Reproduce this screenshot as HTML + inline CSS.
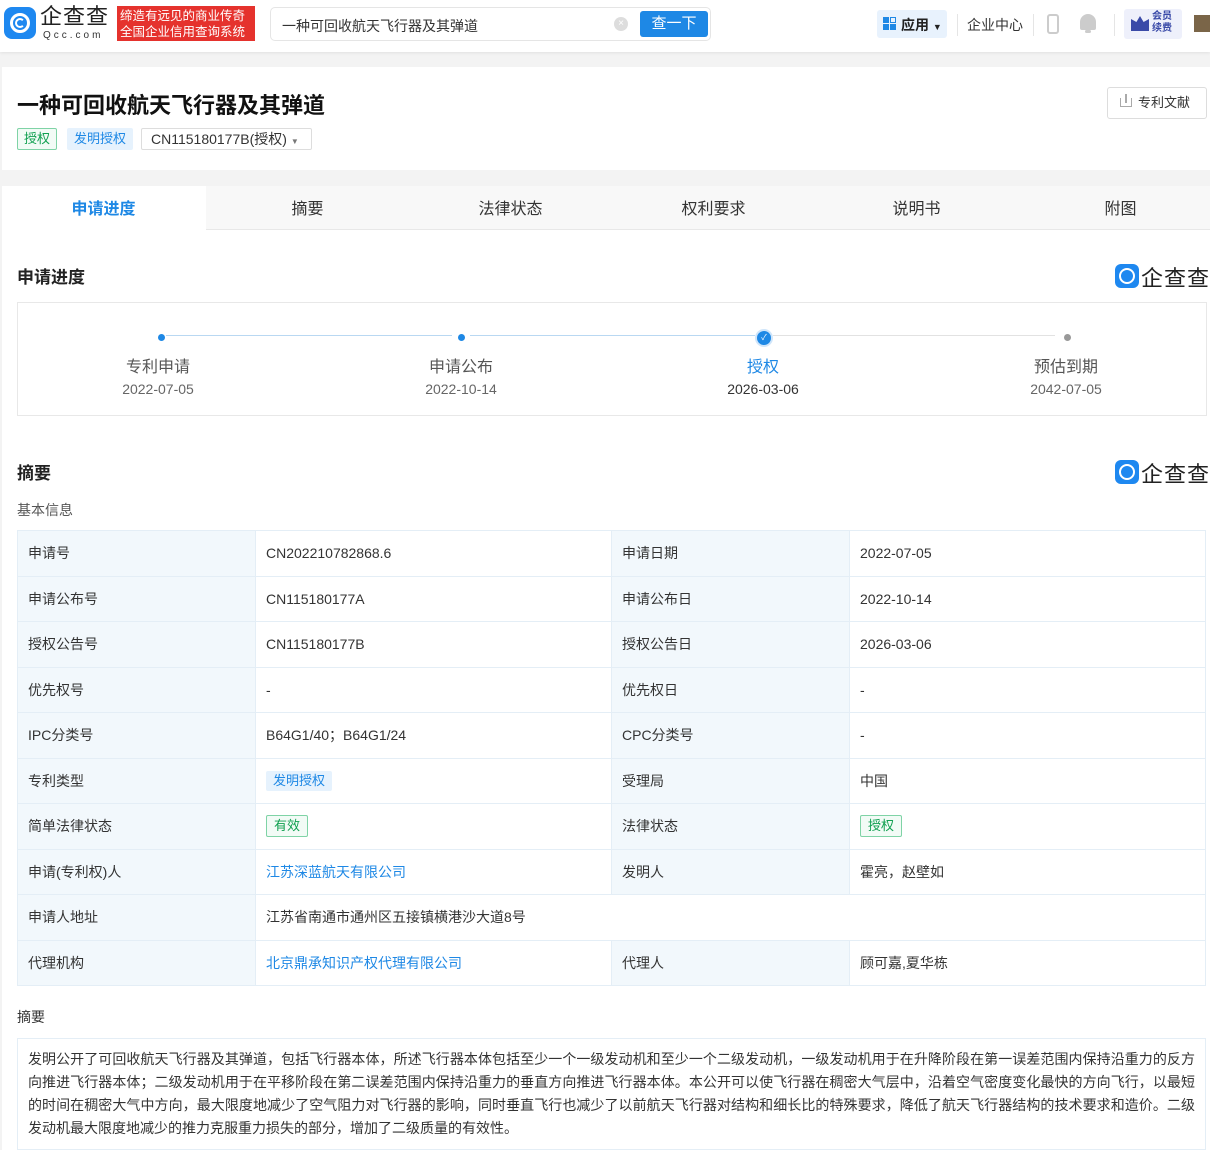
<!DOCTYPE html>
<html><head><meta charset="utf-8">
<style>
*{margin:0;padding:0;box-sizing:border-box}
body{width:1210px;height:1150px;overflow:hidden;background:#f3f3f3;font-family:"Liberation Sans","Noto Sans CJK SC",sans-serif;color:#333;font-size:14px;position:relative}
.abs{position:absolute}
.hdr{left:0;top:0;width:1210px;height:52px;background:#fff;box-shadow:0 1px 3px rgba(0,0,0,.08)}
.card{left:2px;width:1208px;background:#fff}
table{border-collapse:collapse;position:absolute;left:17px;top:530px;width:1189px}
td{border:1px solid #e4eef6;height:45.5px;padding:0 10px;font-size:14px;color:#333}
td.l{background:#f2f8fc;width:238px}
td.v{width:356px}
td.l2{background:#f2f8fc;width:238px}
.tag{display:inline-block;font-size:13px;padding:0 7px;line-height:20px;border-radius:2px}
.blue{background:#e6f2fd;color:#1e88e5}
.green{border:1px solid #7fd3a6;color:#10a050;background:#f2fbf6}
a{color:#1e88e5;text-decoration:none}
.tab{top:186px;height:44px;width:203px;text-align:center;line-height:48px;font-size:16px;color:#333}
.step{text-align:center;width:160px}
.step .n{font-size:16px;color:#555}
.step .d{font-size:14px;color:#666;margin-top:4px}
.logo2{font-size:22px;color:#222;letter-spacing:1px}
</style></head><body>
<div class="abs hdr">
  <div class="abs" style="left:4px;top:7px;width:32px;height:32px;border-radius:8px;background:#1e88f0"><div class="abs" style="left:6px;top:6px;width:20px;height:20px;border:3px solid #fff;border-radius:50%"></div><div class="abs" style="left:11px;top:11px;width:10px;height:10px;border:2px solid #fff;border-radius:50%;border-right-color:transparent"></div></div>
  <div class="abs" style="left:40px;top:4px;font-size:22px;color:#222;letter-spacing:1px;line-height:26px">企查查</div>
  <div class="abs" style="left:43px;top:30px;font-size:10px;letter-spacing:3px;color:#333">Qcc.com</div>
  <div class="abs" style="left:117px;top:6px;width:138px;height:35px;background:#e5322d;color:#fff;font-size:12.5px;line-height:16px;padding:2px 3px">缔造有远见的商业传奇<br>全国企业信用查询系统</div>
  <div class="abs" style="left:270px;top:7px;width:441px;height:34px;border:1px solid #e5e5e5;border-radius:5px"></div>
  <div class="abs" style="left:282px;top:16px;font-size:14px;color:#333">一种可回收航天飞行器及其弹道</div>
  <div class="abs" style="left:614px;top:17px;width:14px;height:14px;border-radius:50%;background:#ddd;color:#fff;font-size:10px;text-align:center;line-height:14px">×</div>
  <div class="abs" style="left:640px;top:11px;width:68px;height:26px;background:#1e88e5;border-radius:3px;color:#fff;text-align:center;line-height:26px;font-size:15px">查一下</div>
  <div class="abs" style="left:877px;top:10px;width:70px;height:28px;background:#e8f2fd;border-radius:3px"></div>
  <div class="abs" style="left:883px;top:17px;width:6px;height:6px;background:#1e88e5"></div><div class="abs" style="left:890px;top:17px;width:6px;height:6px;border:1.5px solid #1e88e5"></div><div class="abs" style="left:883px;top:24px;width:6px;height:6px;background:#1e88e5"></div><div class="abs" style="left:890px;top:24px;width:6px;height:6px;background:#1e88e5"></div>
  <div class="abs" style="left:901px;top:15px;font-size:14px;font-weight:bold;color:#222">应用 <span style="font-size:9px">▼</span></div>
  <div class="abs" style="left:957px;top:14px;width:1px;height:22px;background:#e5e5e5"></div>
  <div class="abs" style="left:967px;top:15px;font-size:14px;color:#333">企业中心</div>
  <div class="abs" style="left:1033px;top:14px;width:1px;height:22px;background:#e5e5e5"></div>
  <div class="abs" style="left:1047px;top:14px;width:12px;height:20px;border:2px solid #ccc;border-radius:3px"></div>
  <div class="abs" style="left:1080px;top:14px;width:16px;height:16px;background:#ccc;border-radius:8px 8px 2px 2px"></div>
  <div class="abs" style="left:1085px;top:30px;width:6px;height:3px;background:#ccc;border-radius:2px"></div>
  <div class="abs" style="left:1114px;top:14px;width:1px;height:22px;background:#e5e5e5"></div>
  <div class="abs" style="left:1124px;top:9px;width:58px;height:30px;background:#eef0fb;border-radius:3px"></div>
  <div class="abs" style="left:1131px;top:16px;width:18px;height:15px;background:#3a4aa8;clip-path:polygon(0 20%,30% 40%,50% 0,70% 40%,100% 20%,100% 100%,0 100%)"></div>
  <div class="abs" style="left:1152px;top:11px;font-size:10px;line-height:12px;color:#3a4aa8;font-weight:bold">会员<br>续费</div>
  <div class="abs" style="left:1194px;top:15px;width:16px;height:17px;background:#7a6548"></div>
</div>

<div class="abs card" style="top:67px;height:103px"></div>
<div class="abs" style="left:17px;top:88px;font-size:22px;font-weight:bold;color:#111">一种可回收航天飞行器及其弹道</div>
<div class="abs" style="left:17px;top:128px;height:22px;border:1px solid #7fd3a6;background:#f2fbf6;color:#10a050;font-size:13px;line-height:20px;padding:0 6px;border-radius:2px">授权</div>
<div class="abs" style="left:67px;top:128px;height:22px;background:#e6f2fd;color:#1e88e5;font-size:13px;line-height:22px;padding:0 7px;border-radius:2px">发明授权</div>
<div class="abs" style="left:141px;top:128px;height:22px;width:171px;border:1px solid #ddd;font-size:14px;line-height:20px;padding-left:9px;color:#333;border-radius:2px">CN115180177B(授权) <span style="font-size:8px;color:#777">▼</span></div>
<div class="abs" style="left:1107px;top:87px;width:100px;height:32px;border:1px solid #ddd;border-radius:3px;font-size:13px;line-height:30px;padding-left:30px;color:#333">专利文献</div>
<div class="abs" style="left:1120px;top:98px;width:12px;height:9px;border:1.5px solid #aaa;border-top:none"></div>
<div class="abs" style="left:1125px;top:94px;width:1.5px;height:9px;background:#aaa"></div>

<div class="abs card" style="top:186px;height:964px"></div>
<div class="abs" style="left:206px;top:186px;width:1004px;height:44px;background:#f8f8f8;border-bottom:1px solid #e8e8e8"></div>
<div class="abs tab" style="left:2px;color:#1e88e5;font-weight:bold;background:#fff">申请进度</div>
<div class="abs tab" style="left:206px">摘要</div>
<div class="abs tab" style="left:409px">法律状态</div>
<div class="abs tab" style="left:612px">权利要求</div>
<div class="abs tab" style="left:815px">说明书</div>
<div class="abs tab" style="left:1019px">附图</div>

<div class="abs" style="left:17px;top:263px;font-size:17px;font-weight:bold;color:#222">申请进度</div>
<div class="abs" style="left:1115px;top:264px;width:24px;height:24px;border-radius:6px;background:#1e88f0"><div class="abs" style="left:4px;top:4px;width:16px;height:16px;border:2.5px solid #fff;border-radius:50%"></div></div>
<div class="abs logo2" style="left:1141px;top:261px">企查查</div>
<div class="abs" style="left:17px;top:302px;width:1190px;height:114px;border:1px solid #e8e8e8"></div>
<div class="abs" style="left:166px;top:335px;width:286px;height:1px;background:#b9d8f2"></div>
<div class="abs" style="left:470px;top:335px;width:285px;height:1px;background:#b9d8f2"></div>
<div class="abs" style="left:773px;top:335px;width:282px;height:1px;background:#e2e2e2"></div>
<div class="abs" style="left:158px;top:334px;width:7px;height:7px;border-radius:50%;background:#1e88e5"></div>
<div class="abs" style="left:458px;top:334px;width:7px;height:7px;border-radius:50%;background:#1e88e5"></div>
<div class="abs" style="left:757px;top:331px;width:14px;height:14px;border-radius:50%;background:#1e88e5;box-shadow:0 0 0 2px #cfe5fa;color:#fff;font-size:8px;text-align:center;line-height:14px">✓</div>
<div class="abs" style="left:1064px;top:334px;width:7px;height:7px;border-radius:50%;background:#999"></div>
<div class="abs step" style="left:78px;top:353px"><div class="n">专利申请</div><div class="d">2022-07-05</div></div>
<div class="abs step" style="left:381px;top:353px"><div class="n">申请公布</div><div class="d">2022-10-14</div></div>
<div class="abs step" style="left:683px;top:353px"><div class="n" style="color:#1e88e5">授权</div><div class="d" style="color:#333">2026-03-06</div></div>
<div class="abs step" style="left:986px;top:353px"><div class="n">预估到期</div><div class="d">2042-07-05</div></div>

<div class="abs" style="left:17px;top:459px;font-size:17px;font-weight:bold;color:#222">摘要</div>
<div class="abs" style="left:1115px;top:460px;width:24px;height:24px;border-radius:6px;background:#1e88f0"><div class="abs" style="left:4px;top:4px;width:16px;height:16px;border:2.5px solid #fff;border-radius:50%"></div></div>
<div class="abs logo2" style="left:1141px;top:457px">企查查</div>
<div class="abs" style="left:17px;top:500px;font-size:14px;color:#555">基本信息</div>

<table>
<tr><td class="l">申请号</td><td class="v">CN202210782868.6</td><td class="l2">申请日期</td><td>2022-07-05</td></tr>
<tr><td class="l">申请公布号</td><td class="v">CN115180177A</td><td class="l2">申请公布日</td><td>2022-10-14</td></tr>
<tr><td class="l">授权公告号</td><td class="v">CN115180177B</td><td class="l2">授权公告日</td><td>2026-03-06</td></tr>
<tr><td class="l">优先权号</td><td class="v">-</td><td class="l2">优先权日</td><td>-</td></tr>
<tr><td class="l">IPC分类号</td><td class="v">B64G1/40；B64G1/24</td><td class="l2">CPC分类号</td><td>-</td></tr>
<tr><td class="l">专利类型</td><td class="v"><span class="tag blue">发明授权</span></td><td class="l2">受理局</td><td>中国</td></tr>
<tr><td class="l">简单法律状态</td><td class="v"><span class="tag green">有效</span></td><td class="l2">法律状态</td><td><span class="tag green">授权</span></td></tr>
<tr><td class="l">申请(专利权)人</td><td class="v"><a>江苏深蓝航天有限公司</a></td><td class="l2">发明人</td><td>霍亮，赵壁如</td></tr>
<tr><td class="l">申请人地址</td><td colspan="3">江苏省南通市通州区五接镇横港沙大道8号</td></tr>
<tr><td class="l">代理机构</td><td class="v"><a>北京鼎承知识产权代理有限公司</a></td><td class="l2">代理人</td><td>顾可嘉,夏华栋</td></tr>
</table>

<div class="abs" style="left:17px;top:1007px;font-size:14px;color:#333">摘要</div>
<div class="abs" style="left:17px;top:1038px;width:1189px;height:112px;border:1px solid #e4eef6;padding:9px 10px;font-size:14px;line-height:23px;color:#333;text-align:justify">发明公开了可回收航天飞行器及其弹道，包括飞行器本体，所述飞行器本体包括至少一个一级发动机和至少一个二级发动机，一级发动机用于在升降阶段在第一误差范围内保持沿重力的反方向推进飞行器本体；二级发动机用于在平移阶段在第二误差范围内保持沿重力的垂直方向推进飞行器本体。本公开可以使飞行器在稠密大气层中，沿着空气密度变化最快的方向飞行，以最短的时间在稠密大气中方向，最大限度地减少了空气阻力对飞行器的影响，同时垂直飞行也减少了以前航天飞行器对结构和细长比的特殊要求，降低了航天飞行器结构的技术要求和造价。二级发动机最大限度地减少的推力克服重力损失的部分，增加了二级质量的有效性。</div>
</body></html>
